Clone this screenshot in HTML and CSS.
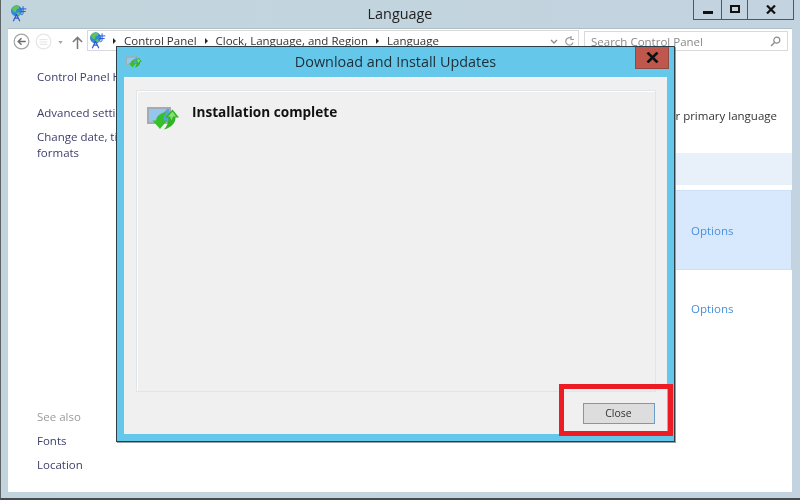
FILE: index.html
```html
<!DOCTYPE html>
<html lang="en">
<head>
<meta charset="utf-8">
<title>Language</title>
<link rel="stylesheet" href="styles.css">
</head>
<body>
<svg class="defs" width="0" height="0" aria-hidden="true">
  <symbol id="globe" viewBox="0 0 26 26">
    <circle cx="10" cy="9" r="8.500" fill="#2f8ad8"/>
    <path d="M3 5c2-3 6-5 10-4l1 4-4 2-1 4-4-1z" fill="#62c25a"/>
    <path d="M10 12l4-1 1 4-4 2z" fill="#62c25a"/>
    <path d="M10 14L5 25M10 14l5 11M7 20h6" stroke="#2a58dc" stroke-width="1.800" fill="none"/>
    <path d="M15 6h10M20 2v10c0 2-1 3-3 3M16 10h8" stroke="#2a58dc" stroke-width="1.500" fill="none"/>
  </symbol>
  <symbol id="update" viewBox="0 0 32 24">
    <rect x="0.500" y="1.500" width="23" height="16" fill="#a3a9ad" stroke="#a7abae"/>
    <rect x="2" y="3" width="20" height="13" fill="#5aa3e2"/>
    <path d="M2 3h18L8 16H2z" fill="#95c6ee"/>
    <path d="M13 23L5.500 14.500h3.500C9.500 10 13 7 20 6c-2.500 2-3.500 5-3.500 8.500H20z" fill="#38c02a"/>
    <path d="M25.500 3.500L32 11.500h-3.500C28.500 17 24.500 21.500 17 23.500c3-3 4.500-7 4.500-12H18z" fill="#2fb523"/>
    <path d="M25.500 5.500L29 10.500h-3l-1.500 4L23 10.500h-2z" fill="#86e075"/>
  </symbol>
</svg>

<div class="window">
  <header class="titlebar">
    <svg class="app-icon"><use href="#globe"/></svg>
    <span class="window-title">Language</span>
    <div class="window-buttons">
      <span class="wbtn wbtn-min"><i class="min-glyph"></i></span>
      <span class="wbtn wbtn-max"><i class="max-glyph"></i></span>
      <span class="wbtn wbtn-close">
        <svg width="10" height="9" viewBox="0 0 10 9"><path d="M1 .5l8 8M9 .5l-8 8" stroke="#111" stroke-width="2.200"/></svg>
      </span>
    </div>
  </header>

  <div class="client">
    <nav class="toolbar">
      <svg class="nav-circle" viewBox="0 0 18 18"><circle cx="9" cy="9" r="7.800" fill="#fff" stroke="#a5a5a5" stroke-width="1.300"/><path d="M13.500 9H5.500M9 5.500L5.500 9 9 12.500" stroke="#6d6d6d" stroke-width="1.500" fill="none"/></svg>
      <svg class="nav-circle" viewBox="0 0 18 18"><circle cx="9" cy="9" r="7.800" fill="#fff" stroke="#e6e6e6" stroke-width="1.300"/><path d="M5 7h8M5 9.500h8M5 12h8" stroke="#e2e2e2" stroke-width="1"/></svg>
      <svg class="nav-drop" viewBox="0 0 6 4"><path d="M0 0h6L3 4z" fill="#a8a8a8"/></svg>
      <svg class="nav-up" viewBox="0 0 12 14"><path d="M6 14V2M1 6.500L6 1.500l5 5" stroke="#7b7b7b" stroke-width="1.700" fill="none"/></svg>
      <div class="address">
        <svg class="addr-icon"><use href="#globe"/></svg>
        <i class="crumb-arrow"></i><span class="crumb">Control Panel</span>
        <i class="crumb-arrow"></i><span class="crumb">Clock, Language, and Region</span>
        <i class="crumb-arrow"></i><span class="crumb">Language</span>
        <span class="addr-tools">
          <svg width="8" height="6" viewBox="0 0 8 6"><path d="M1 1l3 3 3-3" stroke="#8c8c8c" stroke-width="1.300" fill="none"/></svg>
          <svg width="11" height="11" viewBox="0 0 11 11"><path d="M9 6.500A3.700 3.700 0 1 1 7.500 2.300M7 0v3.500h3" stroke="#9a9a9a" stroke-width="1.200" fill="none"/></svg>
        </span>
      </div>
      <div class="search">
        <span class="search-text">Search Control Panel</span>
        <svg width="11" height="11" viewBox="0 0 11 11"><circle cx="6.800" cy="4.200" r="3" stroke="#8b8b8b" stroke-width="1.200" fill="none"/><path d="M4.500 6.500L1 10" stroke="#8b8b8b" stroke-width="1.500"/></svg>
      </div>
    </nav>

    <div class="body">
      <aside class="sidebar">
        <a class="side-link home">Control Panel Home</a>
        <a class="side-link advanced">Advanced settings</a>
        <a class="side-link change">Change date, time, or number formats</a>
        <div class="see-also">
          <span class="see-title">See also</span>
          <a class="side-link">Fonts</a>
          <a class="side-link">Location</a>
        </div>
      </aside>
      <main class="content">
        <p class="intro">Languages at the top of this list are used first. Make this your primary language</p>
        <div class="band"></div>
        <div class="lang-row selected"><a class="options">Options</a></div>
        <div class="lang-row"><a class="options">Options</a></div>
      </main>
    </div>
  </div>
</div>

<section class="dialog">
  <header class="dialog-title">
    <svg class="dialog-icon"><use href="#update"/></svg>
    <span class="dialog-name">Download and Install Updates</span>
    <span class="dialog-close">
      <svg width="13" height="11" viewBox="0 0 13 11"><path d="M1.500 .5l10 10M11.500 .5l-10 10" stroke="#111" stroke-width="2.600"/></svg>
    </span>
  </header>
  <div class="dialog-panel">
    <div class="dialog-box">
      <svg class="status-icon"><use href="#update"/></svg>
      <h1 class="status-text">Installation complete</h1>
    </div>
    <div class="dialog-actions">
      <button class="close-button" type="button">Close</button>
    </div>
  </div>
</section>
<div class="highlight"></div>
</body>
</html>
```
FILE: styles.css
```css
* { box-sizing: border-box; }
html, body { margin: 0; height: 100%; }
body {
  width: 800px;
  height: 500px;
  overflow: hidden;
  position: relative;
  background: #c2d5dc;
  font-family: "Open Sans", "Noto Sans", sans-serif;
  font-size: 11.5px;
  color: #333;
  filter: blur(0.35px);
}
.defs { position: absolute; }
i { display: block; }

.window {
  width: 800px;
  height: 500px;
  display: flex;
  flex-direction: column;
  background: linear-gradient(90deg, #c2d5dc, #c3d3e0);
  border-left: 1px solid #5e6468;
  border-bottom: 2px solid #454a4e;
  padding: 0 8px 6px 7px;
}

.titlebar {
  height: 28px;
  flex: none;
  display: flex;
  align-items: flex-start;
  position: relative;
}
.app-icon { width: 17px; height: 17px; margin: 5px 0 0 2px; }
.window-title {
  position: absolute;
  left: 0; right: 0;
  top: 5px;
  text-align: center;
  font-size: 14.4px;
  line-height: 18px;
  color: #222;
}
.window-buttons {
  position: absolute;
  right: -2px;
  top: 0;
  height: 20px;
  display: flex;
  border: 1px solid #50585c;
  border-top: 0;
}
.wbtn { display: flex; align-items: center; justify-content: center; height: 19px; }
.wbtn-min { width: 28px; border-right: 1px solid #50585c; }
.wbtn-max { width: 26px; border-right: 1px solid #50585c; }
.wbtn-close { width: 45px; }
.min-glyph { width: 10px; height: 3px; background: #111; margin-top: 5px; }
.max-glyph { width: 10px; height: 8px; border: 2px solid #111; margin-top: -1px; }

.client {
  flex: 1;
  min-height: 0;
  background: #fff;
  display: flex;
  flex-direction: column;
  border-top: 1px solid #aebfc6;
}

.toolbar {
  height: 27px;
  flex: none;
  display: flex;
  align-items: flex-start;
  padding: 1px 0 0 5px;
}
.nav-circle { width: 17px; height: 17px; margin: 3px 5px 0 0; flex: none; }
.nav-drop { width: 5px; height: 3px; margin: 11px 0 0 1px; flex: none; }
.nav-up { width: 11px; height: 13px; margin: 6px 0 0 9px; flex: none; }
.address {
  width: 492px;
  height: 21px;
  margin-left: 4px;
  border: 1px solid #d9d9d9;
  display: flex;
  align-items: center;
  flex: none;
  color: #333;
  white-space: nowrap;
}
.addr-icon { width: 17px; height: 17px; margin-left: 1px; flex: none; }
.crumb-arrow {
  width: 0; height: 0;
  border-left: 3px solid #222;
  border-top: 3px solid transparent;
  border-bottom: 3px solid transparent;
  margin: 1px 0 0 7px;
  flex: none;
}
.crumb { margin: 0 1px 0 8px; }
.addr-tools { margin-left: auto; display: flex; align-items: center; gap: 6px; padding: 2px 3px 0 0; }
.search {
  width: 204px;
  height: 20px;
  margin: 1px 0 0 5px;
  border: 1px solid #d9d9d9;
  display: flex;
  align-items: center;
  justify-content: space-between;
  padding: 0 6px;
  flex: none;
  color: #8a8a8a;
}

.body { flex: 1; min-height: 0; display: flex; }
.sidebar {
  width: 200px;
  flex: none;
  padding: 13px 0 0 29px;
  display: flex;
  flex-direction: column;
}
.side-link { display: block; color: #3a3f6b; line-height: 16px; white-space: nowrap; }
.home { margin-bottom: 20px; }
.advanced { margin-bottom: 8px; }
.change { width: 170px; white-space: normal; }
.see-also { margin-top: auto; padding-bottom: 19px; display: flex; flex-direction: column; gap: 8px; }
.see-title { color: #9b9b9b; line-height: 16px; }

.content { flex: 1; min-width: 0; display: flex; flex-direction: column; }
.intro {
  margin: 52px 0 0 0;
  padding-right: 15px;
  line-height: 16px;
  text-align: right;
  white-space: nowrap;
  color: #333;
}
.band { height: 32px; margin-top: 29px; background: #e8f0fa; }
.lang-row {
  height: 78px;
  padding-left: 483px;
  display: flex;
  align-items: center;
}
.selected {
  height: 80px;
  margin-top: 5px;
  padding-top: 1px;
  background: #d9e9fd;
  border: 1px solid #cde0f6;
  border-right-color: #bdd3e4;
  padding-left: 482px;
}
.options { color: #4a8fdc; line-height: 16px; }

.dialog {
  position: absolute;
  left: 116px;
  top: 46px;
  width: 559px;
  height: 396px;
  border: 1px solid #2c3e48;
  box-shadow: 1px 1px 0 #9a9fa2;
  background: #65c8ea;
  display: flex;
  flex-direction: column;
  padding: 0 7px 7px 7px;
}
.dialog-title {
  height: 30px;
  flex: none;
  display: flex;
  align-items: center;
  position: relative;
}
.dialog-icon { width: 16px; height: 12px; margin: 0 0 0 2px; }
.dialog-name {
  position: absolute;
  left: 0; right: 0;
  top: 5px;
  text-align: center;
  font-size: 14.4px;
  line-height: 20px;
  color: #1e2d36;
}
.dialog-close {
  position: absolute;
  right: -2px;
  top: 0;
  width: 34px;
  height: 22px;
  background: #c0574d;
  border: 1px solid #8d4a44;
  border-top: 0;
  display: flex;
  align-items: center;
  justify-content: center;
}
.dialog-panel {
  flex: 1;
  min-height: 0;
  background: #f0f0f0;
  display: flex;
  flex-direction: column;
  padding: 12px 11px 0 12px;
  border-top: 1px solid #f6f8f8;
}
.dialog-box {
  height: 302px;
  flex: none;
  border: 1px solid #dfe5e8;
  box-shadow: inset 1px 1px 0 #fff;
  padding: 14px 0 0 10px;
  display: flex;
  align-items: flex-start;
}
.status-icon { width: 32px; height: 24px; margin-top: 1px; flex: none; }
.status-text {
  margin: -3px 0 0 13px;
  font-size: 13.6px;
  font-weight: 700;
  line-height: 20px;
  color: #111;
}
.dialog-actions { display: flex; justify-content: flex-end; padding: 11px 1px 0 0; }
.close-button {
  width: 72px;
  height: 21px;
  padding: 0 1px 1px 0;
  background: #dddddd;
  border: 1px solid #6c9cc8;
  font: 10.5px "Open Sans", "Noto Sans", sans-serif;
  color: #333;
}
.highlight {
  position: absolute;
  left: 559px;
  top: 384px;
  width: 114px;
  height: 52px;
  border: 5px solid #ed1c24;
}
```
